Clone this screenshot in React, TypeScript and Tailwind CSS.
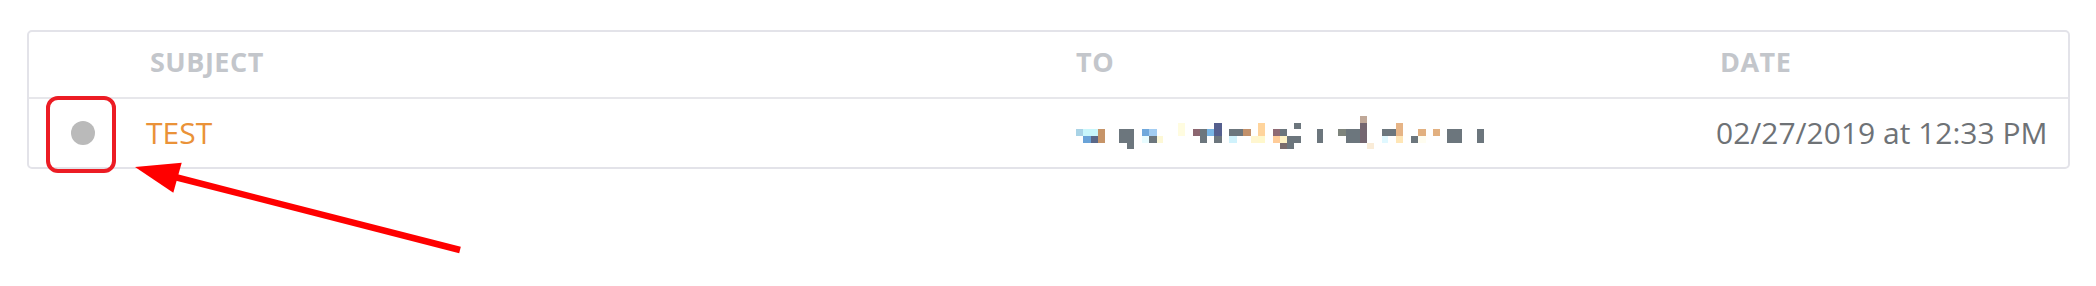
import React from "react";

type R = [number, number, number, number, string];

const G = "#6c767d";
const mosaic: R[] = [
  [48, 65, 22, 20, "#a9d3e6"],
  [70, 65, 22, 20, "#c9f6fb"],
  [70, 85, 22, 20, "#6aa3d8"],
  [92, 65, 22, 20, "#c9f6fb"],
  [92, 85, 22, 20, "#5a6888"],
  [114, 65, 21, 40, "#c69468"],
  [178, 65, 44, 40, G],
  [200, 105, 22, 20, G],
  [245, 65, 23, 20, "#70a8dc"],
  [245, 85, 23, 20, "#e8fcff"],
  [268, 65, 22, 20, "#a3cdf2"],
  [268, 85, 22, 20, G],
  [290, 85, 20, 20, "#fdf8d6"],
  [355, 45, 20, 40, "#fffce0"],
  [398, 65, 22, 20, "#8c6670"],
  [420, 65, 20, 40, G],
  [440, 65, 23, 20, "#79b6e6"],
  [463, 45, 22, 40, "#555f8e"],
  [463, 85, 22, 20, G],
  [508, 65, 22, 20, G],
  [508, 85, 22, 20, "#d0f2fc"],
  [530, 65, 20, 20, G],
  [550, 65, 22, 20, "#c2906a"],
  [572, 85, 23, 20, "#fff6d0"],
  [595, 45, 20, 40, "#ffd49c"],
  [595, 85, 20, 20, "#fff8cc"],
  [640, 65, 20, 20, "#8e6a74"],
  [640, 85, 20, 20, "#ffcc99"],
  [660, 65, 20, 20, G],
  [660, 85, 20, 20, "#fff3c4"],
  [660, 105, 20, 20, "#7a6c6c"],
  [680, 85, 22, 40, G],
  [702, 45, 22, 20, G],
  [702, 85, 22, 20, G],
  [770, 65, 20, 40, G],
  [835, 65, 23, 20, "#7e847c"],
  [858, 65, 42, 40, G],
  [900, 25, 20, 20, "#c0a898"],
  [900, 45, 20, 60, "#746670"],
  [920, 105, 22, 20, "#faecd8"],
  [965, 65, 20, 20, G],
  [965, 85, 20, 20, "#e0f8ff"],
  [985, 65, 22, 20, G],
  [1007, 45, 23, 40, "#e6b486"],
  [1007, 85, 23, 20, "#ffe6b6"],
  [1052, 85, 23, 20, G],
  [1075, 65, 22, 20, "#e2b080"],
  [1075, 85, 22, 20, "#fffdf0"],
  [1118, 65, 22, 20, "#e2b080"],
  [1162, 65, 45, 40, G],
  [1250, 65, 22, 40, G],
];

function Mosaic() {
  return (
    <svg
      width={408}
      height={33.33}
      viewBox="48 25 1224 100"
      shapeRendering="crispEdges"
      className="block"
    >
      {mosaic.map(([x, y, w, h, c], i) => (
        <rect key={i} x={x} y={y} width={w} height={h} fill={c} />
      ))}
    </svg>
  );
}

export default function App() {
  return (
    <div className="relative w-[2096px] h-[286px] bg-white font-['Open_Sans',sans-serif] overflow-hidden">
      <div className="pt-[30px] pl-[27px]">
        <div className="w-[2043px] border-2 border-[#e3e3e9] rounded-[5px]">
          {/* header */}
          <div className="flex h-[67px] items-start pt-[16px] border-b-2 border-[#e7e7eb] text-[27px] leading-[27px] font-bold tracking-[0.5px] text-[#c3c6cb]">
            <div className="w-[117px]" />
            <div className="w-[920px] pl-[4px]">SUBJECT</div>
            <div className="w-[650px] pl-[10px]">TO</div>
            <div className="flex-1 pl-[4px]">DATE</div>
          </div>
          {/* row */}
          <div className="flex h-[68px] items-center text-[30px] leading-[30px]">
            <div className="w-[117px] pl-[42px] flex items-center">
              <div className="w-[24px] h-[24px] rounded-full bg-[#bababa]" />
            </div>
            <div className="w-[920px] text-[#ea9238]">TEST</div>
            <div className="w-[650px] pl-[10px]">
              <Mosaic />
            </div>
            <div className="flex-1 text-[#6e7276]">02/27/2019 at 12:33 PM</div>
          </div>
        </div>
      </div>

      {/* annotation: red rounded box */}
      <div className="absolute left-[46px] top-[96px] w-[70px] h-[77px] border-[4px] border-[#ec1c24] rounded-[12px]" />

      {/* annotation: red arrow */}
      <svg
        className="absolute left-[120px] top-[150px] pointer-events-none"
        width={360}
        height={110}
        viewBox="0 0 360 110"
      >
        <line x1={55} y1={27} x2={340} y2={100} stroke="#ff0000" strokeWidth={6.5} />
        <polygon points="15,17 61.7,12.7 53.3,42.7" fill="#ff0000" />
      </svg>
    </div>
  );
}
